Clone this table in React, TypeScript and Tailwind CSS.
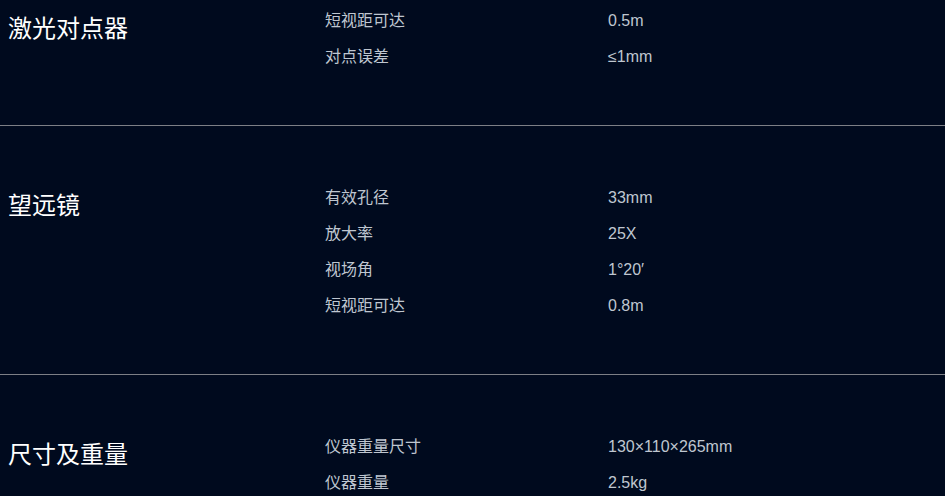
import React from 'react';

interface SpecGroup {
  title: string;
  rows: [string, string][];
}

const groups: SpecGroup[] = [
  {
    title: '激光对点器',
    rows: [
      ['短视距可达', '0.5m'],
      ['对点误差', '≤1mm'],
    ],
  },
  {
    title: '望远镜',
    rows: [
      ['有效孔径', '33mm'],
      ['放大率', '25X'],
      ['视场角', '1°20′'],
      ['短视距可达', '0.8m'],
    ],
  },
  {
    title: '尺寸及重量',
    rows: [
      ['仪器重量尺寸', '130×110×265mm'],
      ['仪器重量', '2.5kg'],
    ],
  },
];

const App: React.FC = () => {
  return (
    <div
      className="w-[945px] h-[496px] overflow-hidden bg-[#000a1e]"
      style={{ fontFamily: '"Liberation Sans", "Noto Sans CJK SC", sans-serif' }}
    >
      {groups.map((g, i) => (
        <div
          key={g.title}
          className={`flex border-b border-[#7d7f86] pb-[50px] ${i === 0 ? 'pt-[3px]' : 'pt-[54px]'}`}
        >
          <div className="w-[325px] shrink-0 pl-2">
            <h3 className="mt-[10px] text-2xl leading-8 text-white">{g.title}</h3>
          </div>
          <div className="flex flex-col">
            {g.rows.map(([label, value]) => (
              <div key={label} className="flex h-9 items-center text-base text-[#bfc6d0]">
                <span className="w-[283px] shrink-0">{label}</span>
                <span>{value}</span>
              </div>
            ))}
          </div>
        </div>
      ))}
    </div>
  );
};

export default App;
